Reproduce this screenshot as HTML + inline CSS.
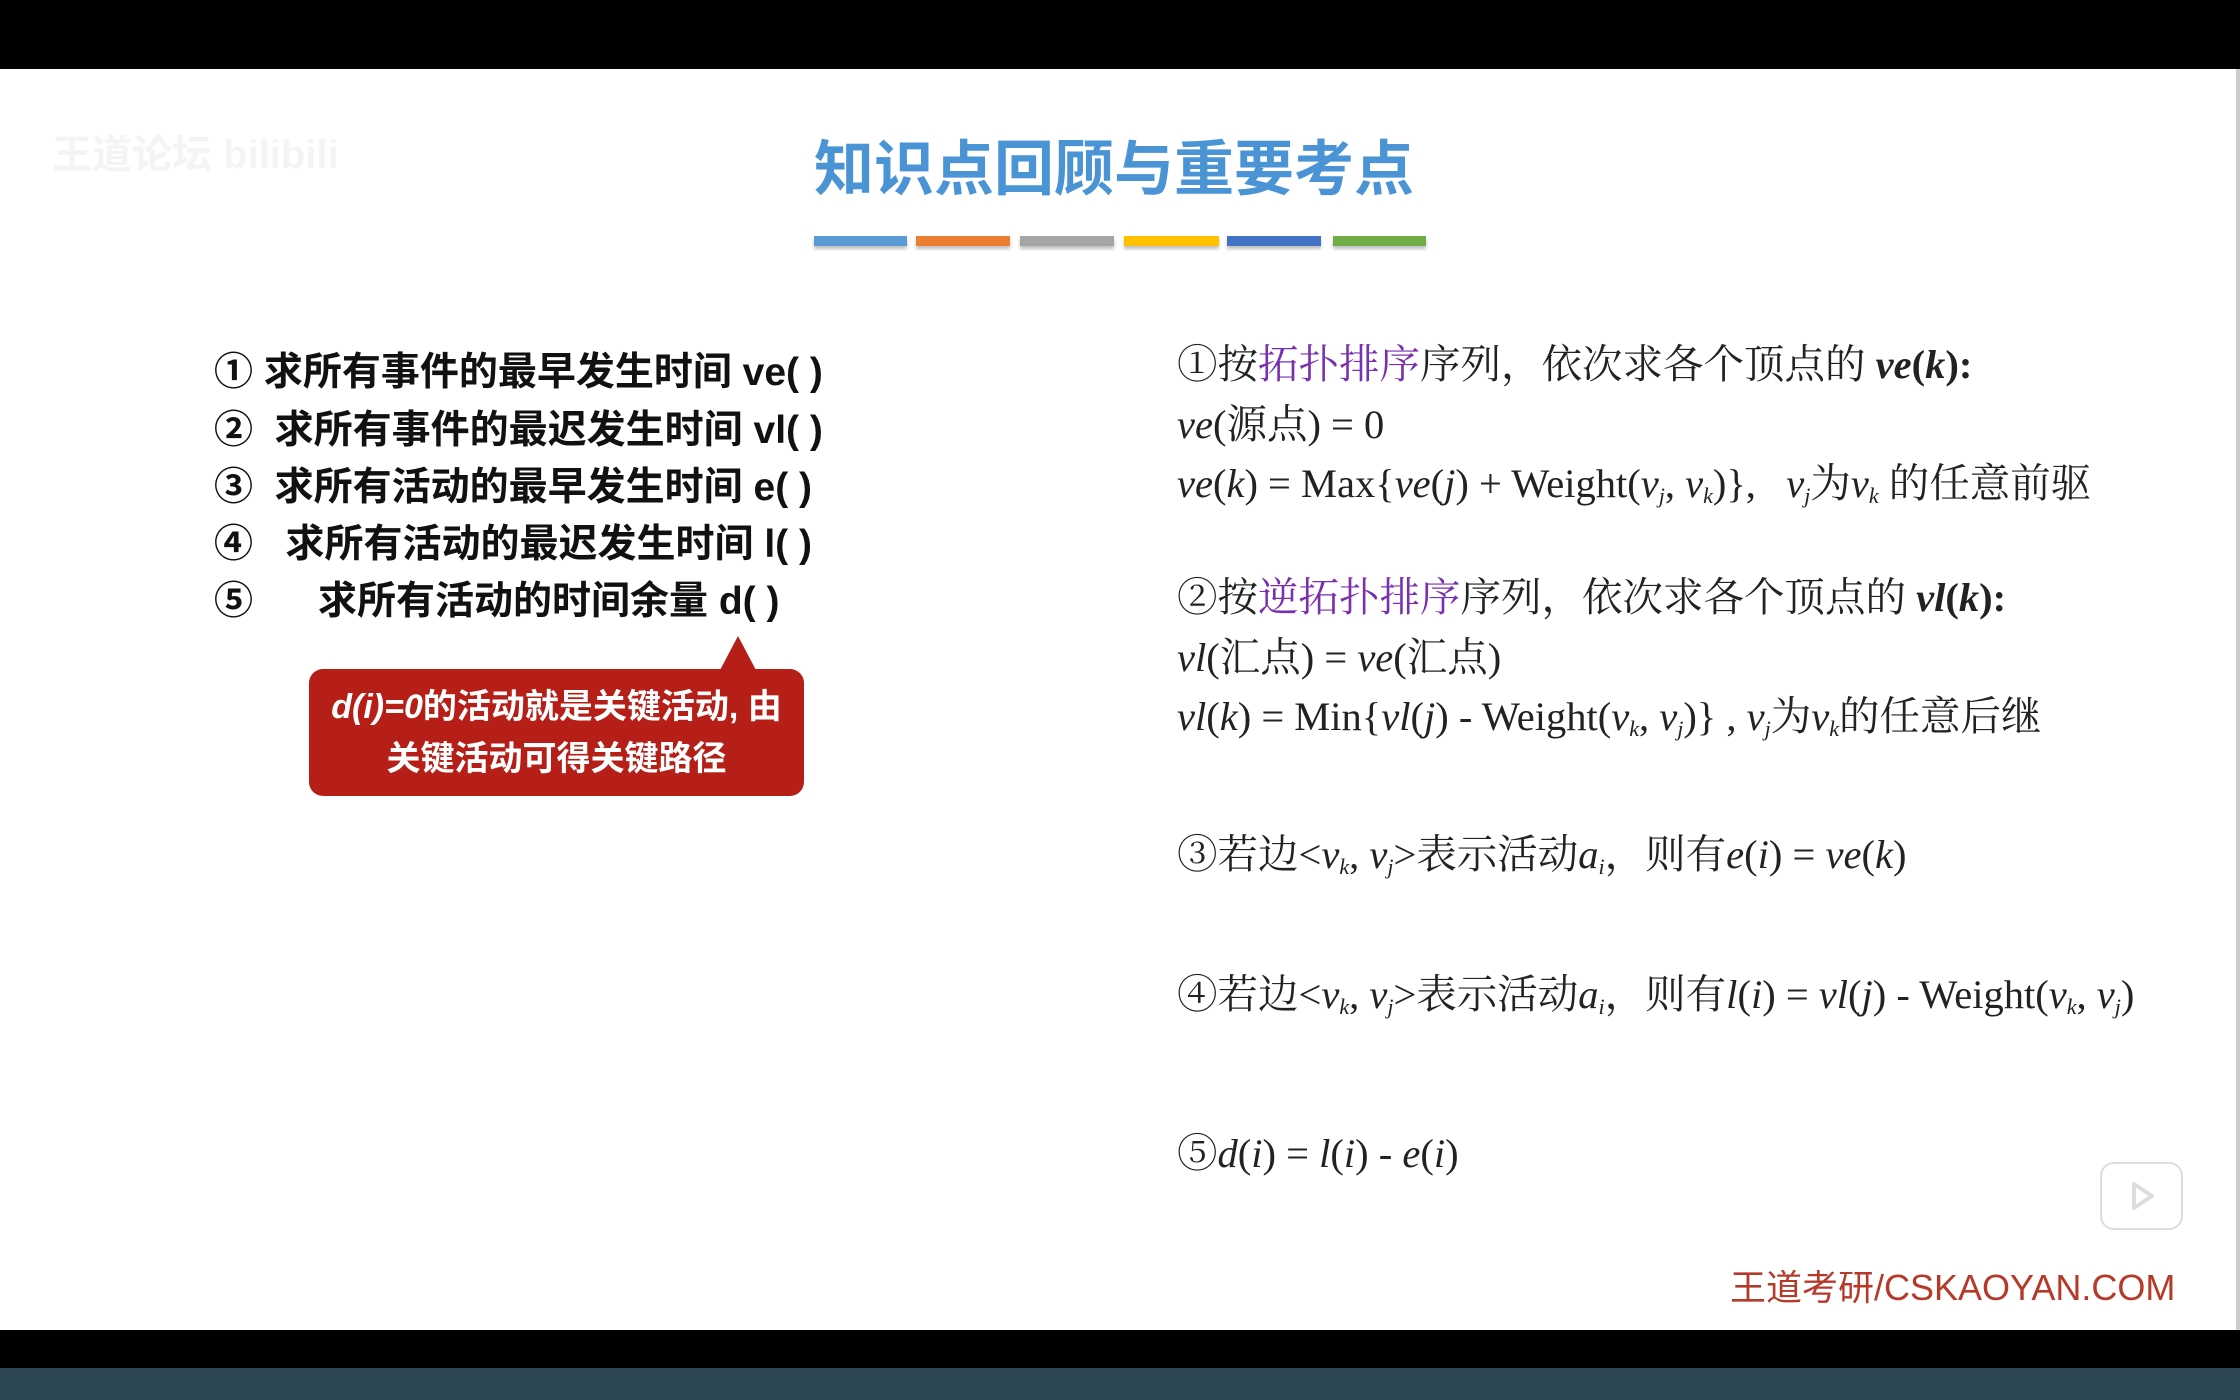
<!DOCTYPE html>
<html><head><meta charset="utf-8"><style>
*{margin:0;padding:0;box-sizing:border-box}
body{width:2240px;height:1400px;background:#000;position:relative;overflow:hidden;font-family:"Liberation Sans","Noto Sans CJK SC",sans-serif}
.slide{position:absolute;left:0;top:69px;width:2240px;height:1261px;background:#fff;border-right:4px solid #ccc}
.a{position:absolute;white-space:nowrap}
.t{left:814px;top:130px;font-size:60px;font-weight:bold;color:#4a94d6;line-height:80px}
.bar{position:absolute;top:236px;height:10px;box-shadow:0 3px 3px rgba(0,0,0,.25)}
.l{left:214px;font-size:39px;font-weight:bold;color:#111;line-height:50px}
.r{left:1177px;font-family:"Liberation Serif","Noto Serif CJK SC",serif;font-size:40.5px;color:#222;line-height:50px}
.r i{font-style:italic}
.p{color:#7a2fb0}
sub{font-size:22px;vertical-align:-6px;font-style:italic}
.call{position:absolute;left:309px;top:669px;width:495px;height:127px;background:#b51f17;border-radius:14px;color:#fff;font-weight:bold;font-size:34px;text-align:center;line-height:52px;padding-top:12px}
.tri{position:absolute;left:719px;top:636px;width:0;height:0;border-left:19px solid transparent;border-right:19px solid transparent;border-bottom:36px solid #b51f17}
.foot{left:1730px;top:1266px;font-size:36px;color:#b63a2a;line-height:44px}
.wave{position:absolute;left:0;top:1368px;width:2240px;height:32px;background:#2c4752}
.play{position:absolute;left:2100px;top:1162px;width:83px;height:68px;border:2px solid #ddd;border-radius:14px;background:#fff}
.wm{left:52px;top:130px;font-size:40px;color:#f4f4f4;font-weight:bold;line-height:50px}
</style></head><body>
<div class="slide"></div>
<div class="a wm">王道论坛 bilibili</div>
<div class="a t">知识点回顾与重要考点</div>
<div class="bar" style="left:814px;width:93px;background:#5b9bd5"></div>
<div class="bar" style="left:916px;width:94px;background:#ed7d31"></div>
<div class="bar" style="left:1020px;width:94px;background:#a5a5a5"></div>
<div class="bar" style="left:1124px;width:95px;background:#ffc000"></div>
<div class="bar" style="left:1227px;width:94px;background:#4472c4"></div>
<div class="bar" style="left:1333px;width:93px;background:#70ad47"></div>

<div class="a l" style="top:348px">① 求所有事件的最早发生时间 ve( )</div>
<div class="a l" style="top:406px">② &nbsp;求所有事件的最迟发生时间 vl( )</div>
<div class="a l" style="top:463px">③ &nbsp;求所有活动的最早发生时间 e( )</div>
<div class="a l" style="top:520px">④ &nbsp; 求所有活动的最迟发生时间 l( )</div>
<div class="a l" style="top:577px">⑤ &nbsp; &nbsp; &nbsp;求所有活动的时间余量 d( )</div>
<div class="tri"></div>
<div class="call"><i>d(i)=0</i>的活动就是关键活动, 由<br>关键活动可得关键路径</div>

<div class="a r" style="top:340px">①按<span class="p">拓扑排序</span>序列，依次求各个顶点的 <b><i>ve</i>(<i>k</i>):</b></div>
<div class="a r" style="top:400px"><i>ve</i>(源点) = 0</div>
<div class="a r" style="top:459px"><i>ve</i>(<i>k</i>) = Max{<i>ve</i>(<i>j</i>) + Weight(<i>v</i><sub>j</sub>, <i>v</i><sub>k</sub>)}, &nbsp; <i>v</i><sub>j</sub>为<i>v</i><sub>k</sub> 的任意前驱</div>
<div class="a r" style="top:573px">②按<span class="p">逆拓扑排序</span>序列，依次求各个顶点的 <b><i>vl</i>(<i>k</i>):</b></div>
<div class="a r" style="top:633px"><i>vl</i>(汇点) = <i>ve</i>(汇点)</div>
<div class="a r" style="top:692px"><i>vl</i>(<i>k</i>) = Min{<i>vl</i>(<i>j</i>) - Weight(<i>v</i><sub>k</sub>, <i>v</i><sub>j</sub>)} , <i>v</i><sub>j</sub>为<i>v</i><sub>k</sub>的任意后继</div>
<div class="a r" style="top:830px">③若边&lt;<i>v</i><sub>k</sub>, <i>v</i><sub>j</sub>&gt;表示活动<i>a</i><sub>i</sub>，则有<i>e</i>(<i>i</i>) = <i>ve</i>(<i>k</i>)</div>
<div class="a r" style="top:970px">④若边&lt;<i>v</i><sub>k</sub>, <i>v</i><sub>j</sub>&gt;表示活动<i>a</i><sub>i</sub>，则有<i>l</i>(<i>i</i>) = <i>vl</i>(<i>j</i>) - Weight(<i>v</i><sub>k</sub>, <i>v</i><sub>j</sub>)</div>
<div class="a r" style="top:1129px">⑤<i>d</i>(<i>i</i>) = <i>l</i>(<i>i</i>) - <i>e</i>(<i>i</i>)</div>

<div class="play"><svg width="83" height="68" viewBox="0 0 83 68" style="position:absolute;left:-2px;top:-2px"><path d="M34 22 L52 34 L34 46 Z" fill="none" stroke="#ddd" stroke-width="4" stroke-linejoin="round"/></svg></div>
<div class="a foot">王道考研/CSKAOYAN.COM</div>
<div class="wave"></div>
</body></html>
